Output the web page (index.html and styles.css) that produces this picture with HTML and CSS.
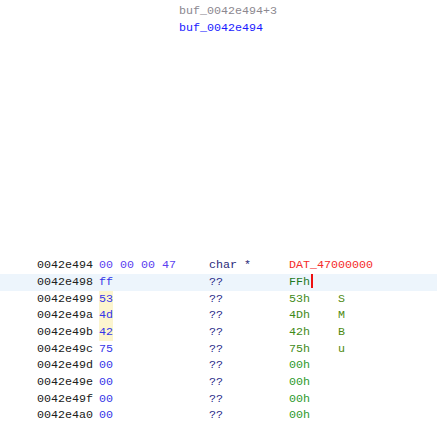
FILE: index.html
```html
<!DOCTYPE html>
<html>
<head>
<meta charset="utf-8">
<link rel="stylesheet" href="styles.css">
</head>
<body>
<div class="refs">
  <div class="ref ref-gray">buf_0042e494+3</div>
  <div class="ref ref-blue">buf_0042e494</div>
</div>
<div class="listing">
  <div class="row">
    <span class="addr">0042e494</span><span class="bytes first">00 00 00 47</span><span class="type">char *</span><span class="val red">DAT_47000000</span><span class="chr"></span>
  </div>
  <div class="row sel">
    <span class="addr">0042e498</span><span class="bytes"><span class="b">ff</span></span><span class="type q">??</span><span class="val dk">FFh<span class="caret"></span></span><span class="chr"></span>
  </div>
  <div class="row">
    <span class="addr">0042e499</span><span class="bytes"><span class="b hl">53</span></span><span class="type q">??</span><span class="val ol">53h</span><span class="chr">S</span>
  </div>
  <div class="row">
    <span class="addr">0042e49a</span><span class="bytes"><span class="b hl">4d</span></span><span class="type q">??</span><span class="val ol">4Dh</span><span class="chr">M</span>
  </div>
  <div class="row">
    <span class="addr">0042e49b</span><span class="bytes"><span class="b hl">42</span></span><span class="type q">??</span><span class="val ol">42h</span><span class="chr">B</span>
  </div>
  <div class="row">
    <span class="addr">0042e49c</span><span class="bytes"><span class="b">75</span></span><span class="type q">??</span><span class="val ol">75h</span><span class="chr">u</span>
  </div>
  <div class="row">
    <span class="addr">0042e49d</span><span class="bytes"><span class="b">00</span></span><span class="type q">??</span><span class="val gr">00h</span><span class="chr"></span>
  </div>
  <div class="row">
    <span class="addr">0042e49e</span><span class="bytes"><span class="b">00</span></span><span class="type q">??</span><span class="val gr">00h</span><span class="chr"></span>
  </div>
  <div class="row">
    <span class="addr">0042e49f</span><span class="bytes"><span class="b">00</span></span><span class="type q">??</span><span class="val gr">00h</span><span class="chr"></span>
  </div>
  <div class="row">
    <span class="addr">0042e4a0</span><span class="bytes"><span class="b">00</span></span><span class="type q">??</span><span class="val gr">00h</span><span class="chr"></span>
  </div>
</div>
</body>
</html>
```
FILE: styles.css
```css
html, body {
  margin: 0;
  padding: 0;
  background: #ffffff;
}
body {
  font-family: "Liberation Mono", "Courier New", monospace;
  font-size: 11.67px;
  line-height: 16.67px;
  color: #1a1a1a;
}
.refs {
  padding: 3px 0 0 179px;
}
.ref {
  white-space: pre;
}
.ref-gray { color: #8c8890; }
.ref-blue { color: #1a1aff; }
.listing {
  margin-top: 221px;
}
.row {
  display: flex;
  height: 16.67px;
  padding-left: 37px;
  white-space: pre;
}
.row.sel {
  background: #edf5fc;
}
.addr { width: 62px; color: #202020; }
.bytes { width: 110px; color: #3535e8; }
.bytes.first { color: #5a40f0; }
.b { display: inline-block; width: 14px; }
.b.hl { background: #fcf5cf; }
.type { width: 80px; color: #2a2a7a; }
.type.q { color: #2a2a8a; }
.val { width: 49px; position: relative; }
.red { color: #f52a2a; }
.dk { color: #1f7a1f; }
.ol { color: #3f8a1a; }
.gr { color: #2c9a2c; }
.chr { color: #4f8a10; }
.caret {
  display: inline-block;
  width: 2px;
  height: 14px;
  background: #ee1111;
  vertical-align: -3px;
  margin-left: 1px;
}
```
